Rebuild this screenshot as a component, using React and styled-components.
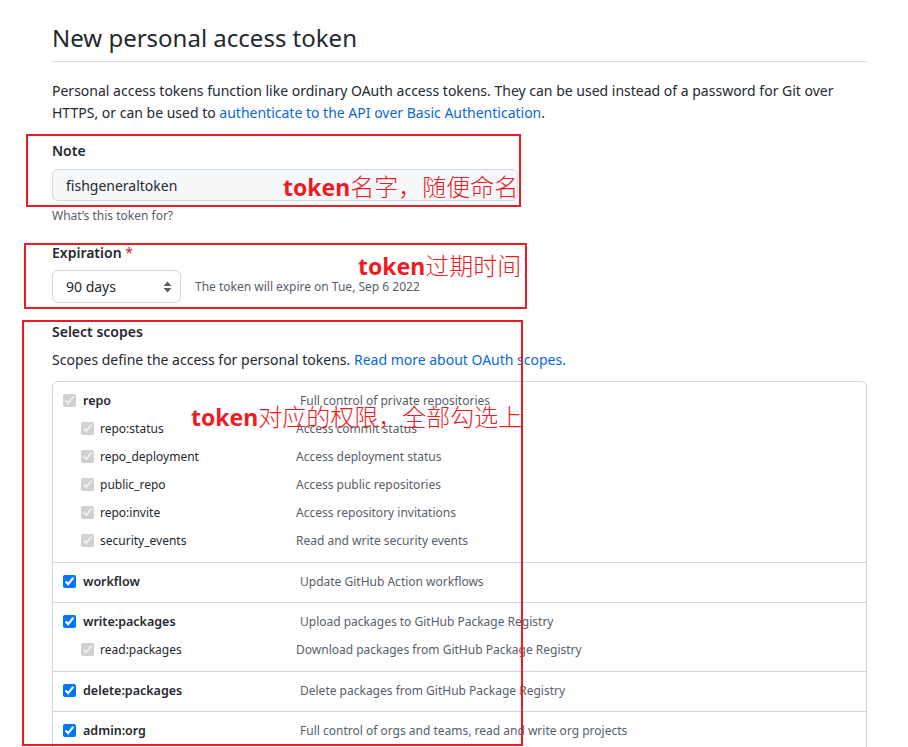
import React from 'react';
import styled, { createGlobalStyle } from 'styled-components';

const GlobalStyle = createGlobalStyle`
    body {
        margin: 0;
        background: #ffffff;
        color: #24292f;
        font-family: "Noto Sans", "Open Sans", "Noto Sans CJK SC", sans-serif;
    }
`;

const scopeGroups = [
    {
        name: 'repo',
        desc: 'Full control of private repositories',
        locked: true,
        children: [
            { name: 'repo:status', desc: 'Access commit status' },
            { name: 'repo_deployment', desc: 'Access deployment status' },
            { name: 'public_repo', desc: 'Access public repositories' },
            { name: 'repo:invite', desc: 'Access repository invitations' },
            { name: 'security_events', desc: 'Read and write security events' },
        ],
    },
    { name: 'workflow', desc: 'Update GitHub Action workflows' },
    {
        name: 'write:packages',
        desc: 'Upload packages to GitHub Package Registry',
        children: [{ name: 'read:packages', desc: 'Download packages from GitHub Package Registry' }],
    },
    { name: 'delete:packages', desc: 'Delete packages from GitHub Package Registry' },
    { name: 'admin:org', desc: 'Full control of orgs and teams, read and write org projects' },
];

const SortArrows = () => (
    <svg width="9" height="12" viewBox="0 0 9 12">
        <path d="M4.5 0.5 L8.5 5 L0.5 5 Z" fill="#57606a" />
        <path d="M4.5 11.5 L8.5 7 L0.5 7 Z" fill="#57606a" />
    </svg>
);

const App = () => {
    return (
        <Page>
            <GlobalStyle />
            <Header>
                <Title>New personal access token</Title>
            </Header>

            <Intro>
                Personal access tokens function like ordinary OAuth access tokens. They can be used instead of a
                password for Git over HTTPS, or can be used to{' '}
                <Link href="#">authenticate to the API over Basic Authentication</Link>.
            </Intro>

            <Field>
                <Label>Note</Label>
                <TextInput readOnly defaultValue="fishgeneraltoken" />
                <Hint>What&rsquo;s this token for?</Hint>
            </Field>

            <Field $gap={18}>
                <Label>
                    Expiration <Required>*</Required>
                </Label>
                <ExpireRow>
                    <SelectBox>
                        90 days
                        <SortArrows />
                    </SelectBox>
                    <ExpireNote>The token will expire on Tue, Sep 6 2022</ExpireNote>
                </ExpireRow>
            </Field>

            <Field $gap={19}>
                <Label>Select scopes</Label>
                <ScopeIntro>
                    Scopes define the access for personal tokens. <Link href="#">Read more about OAuth scopes.</Link>
                </ScopeIntro>
                <ScopeTable>
                    {scopeGroups.map((group) => (
                        <ScopeGroup key={group.name} $nested={!!group.children}>
                            <ScopeRow>
                                <Check type="checkbox" checked readOnly disabled={group.locked} />
                                <ScopeName>{group.name}</ScopeName>
                                <ScopeDesc>{group.desc}</ScopeDesc>
                            </ScopeRow>
                            {group.children && (
                                <SubList>
                                    {group.children.map((child) => (
                                        <SubRow key={child.name}>
                                            <Check type="checkbox" checked readOnly disabled $sub />
                                            <SubName>{child.name}</SubName>
                                            <ScopeDesc>{child.desc}</ScopeDesc>
                                        </SubRow>
                                    ))}
                                </SubList>
                            )}
                        </ScopeGroup>
                    ))}
                </ScopeTable>
            </Field>

            <Marker $top={134} $left={26} $w={495} $h={73} />
            <Marker $top={243} $left={24} $w={503} $h={66} />
            <Marker $top={320} $left={22} $w={501} $h={426} />

            <Callout $top={186} $left={283}>
                <b>token</b>名字，随便命名
            </Callout>
            <Callout $top={265} $left={358}>
                <b>token</b>过期时间
            </Callout>
            <Callout $top={416} $left={191}>
                <b>token</b>对应的权限，全部勾选上
            </Callout>
        </Page>
    );
};

export default App;

const Page = styled.div`
    position: relative;
    padding: 22px 41px 0 52px;
    font-size: 14px;
    line-height: 22px;
`;

const Header = styled.div`
    padding-bottom: 7px;
    border-bottom: 1px solid #d8dee4;
`;

const Title = styled.h1`
    margin: 0;
    font-size: 24px;
    font-weight: 400;
    line-height: 32px;
`;

const Intro = styled.p`
    margin: 18px 0 0;
    font-size: 14px;
    line-height: 22px;
`;

const Link = styled.a`
    color: #0969da;
    text-decoration: none;
`;

const Field = styled.div`
    margin-top: ${(p) => (p.$gap ? p.$gap : 17)}px;
    display: flex;
    flex-direction: column;
    align-items: flex-start;
`;

const Label = styled.div`
    font-size: 14px;
    font-weight: 600;
    line-height: 20px;
`;

const Required = styled.span`
    color: #cf222e;
    font-weight: 400;
`;

const TextInput = styled.input`
    box-sizing: border-box;
    margin-top: 8px;
    width: 466px;
    height: 32px;
    padding: 0 13px;
    border: 1px solid #d0d7de;
    border-radius: 6px;
    background: #f6f8fa;
    color: #24292f;
    font-family: inherit;
    font-size: 14px;
    outline: none;
`;

const Hint = styled.div`
    margin-top: 6px;
    font-size: 12px;
    line-height: 18px;
    color: #57606a;
`;

const ExpireRow = styled.div`
    margin-top: 7px;
    display: flex;
    align-items: center;
    gap: 14px;
`;

const SelectBox = styled.div`
    box-sizing: border-box;
    width: 129px;
    height: 33px;
    padding: 0 8px 0 13px;
    display: flex;
    align-items: center;
    justify-content: space-between;
    border: 1px solid #d0d7de;
    border-radius: 6px;
    background: #ffffff;
    font-size: 14px;
`;

const ExpireNote = styled.div`
    font-size: 12px;
    color: #57606a;
`;

const ScopeIntro = styled.div`
    margin-top: 7px;
    font-size: 14px;
    line-height: 22px;
`;

const ScopeTable = styled.div`
    box-sizing: border-box;
    margin-top: 10px;
    width: 100%;
    border: 1px solid #d0d7de;
    border-radius: 6px;
`;

const ScopeGroup = styled.div`
    padding: 9px 10px ${(p) => (p.$nested ? 7 : 10)}px;
    border-top: 1px solid #d0d7de;

    &:first-child {
        border-top: none;
    }
`;

const ScopeRow = styled.div`
    display: flex;
    align-items: center;
    height: 20px;
`;

const SubList = styled.div`
    margin-top: 4px;
    padding-left: 18px;
`;

const SubRow = styled.div`
    display: flex;
    align-items: center;
    height: 28px;
`;

const Check = styled.input`
    width: 13px;
    height: 13px;
    margin: 0 ${(p) => (p.$sub ? 6 : 7)}px 2px 0;
    flex-shrink: 0;
`;

const ScopeName = styled.span`
    width: 217px;
    font-size: 12.5px;
    font-weight: 600;
`;

const SubName = styled.span`
    width: 196px;
    font-size: 12px;
`;

const ScopeDesc = styled.span`
    font-size: 12px;
    color: #57606a;
`;

const Marker = styled.div`
    position: absolute;
    top: ${(p) => p.$top}px;
    left: ${(p) => p.$left}px;
    width: ${(p) => p.$w}px;
    height: ${(p) => p.$h}px;
    box-sizing: border-box;
    border: 2px solid #ed1c24;
    pointer-events: none;
`;

const Callout = styled.div`
    position: absolute;
    top: ${(p) => p.$top - 16}px;
    left: ${(p) => p.$left}px;
    color: #ed1c24;
    font-family: "Noto Sans CJK SC", sans-serif;
    font-size: 24px;
    font-weight: 300;
    line-height: 32px;
    white-space: nowrap;

    b {
        font-family: "Noto Sans", sans-serif;
        font-weight: 700;
        font-size: 23px;
    }
`;
